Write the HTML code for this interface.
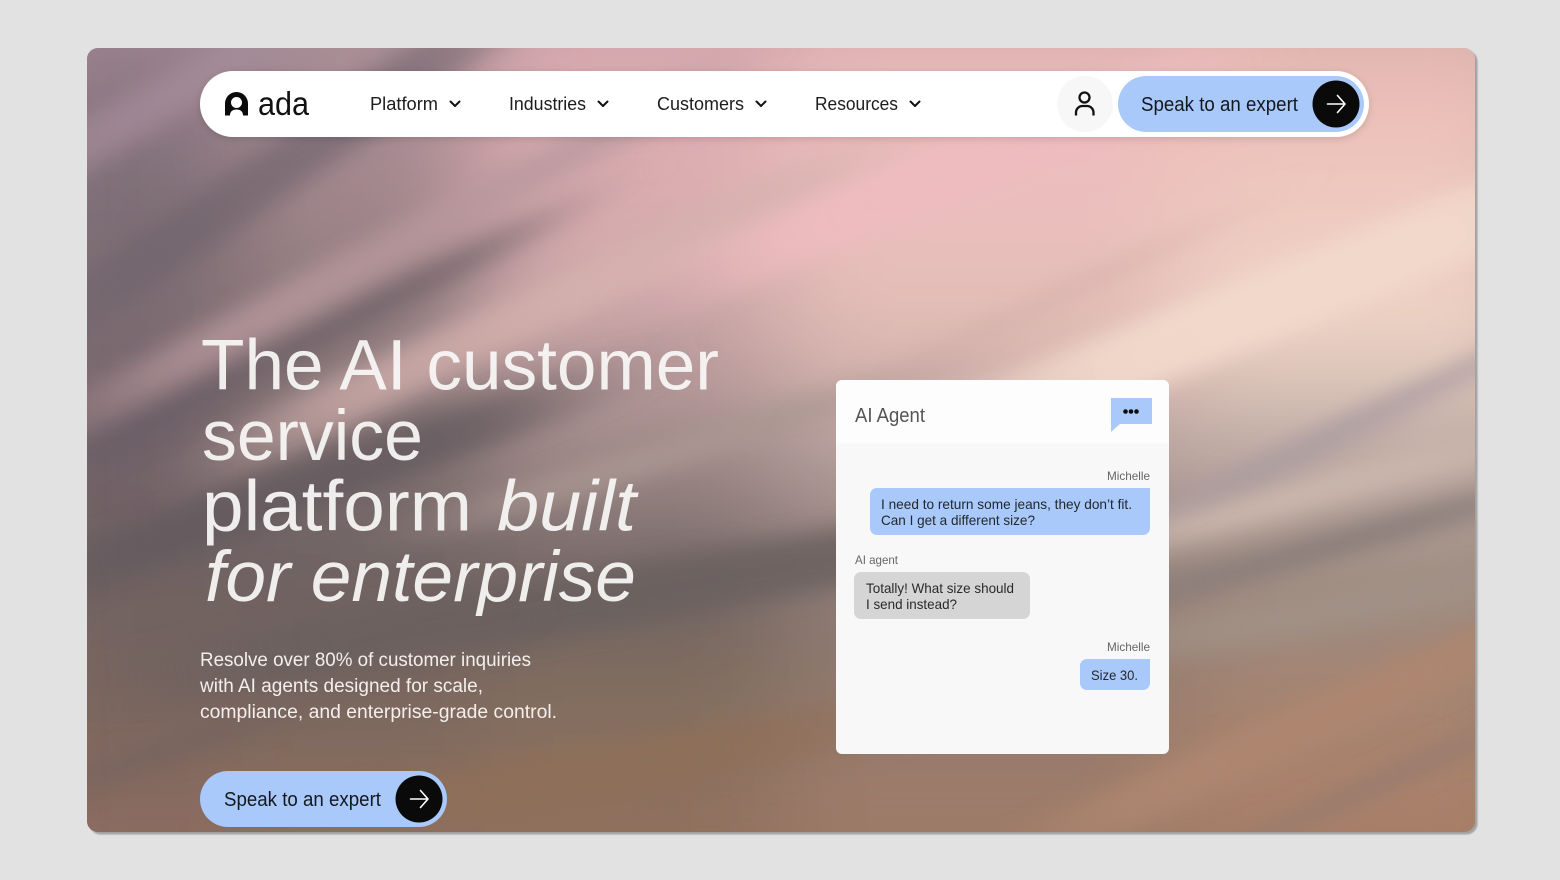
<!DOCTYPE html>
<html lang="en">
<head>
<meta charset="utf-8">
<title>Ada</title>
<style>
html,body{margin:0;padding:0;width:1560px;height:880px;overflow:hidden;background:#e2e2e2}
svg{display:block}
text{font-family:"Liberation Sans",sans-serif}
</style>
</head>
<body>
<svg width="1560" height="880" viewBox="0 0 1560 880" xmlns="http://www.w3.org/2000/svg">
<defs>
<clipPath id="card"><rect x="87" y="48" width="1388" height="784" rx="11"/></clipPath>
<linearGradient id="base" x1="0" y1="0" x2="0" y2="1"><stop offset="0" stop-color="#b09a98"/><stop offset=".7" stop-color="#96796c"/><stop offset="1" stop-color="#94745f"/></linearGradient>
<filter id="b45" filterUnits="userSpaceOnUse" x="0" y="0" width="1560" height="880"><feGaussianBlur stdDeviation="55"/></filter>
<filter id="s" x="-60%" y="-300%" width="220%" height="700%"><feGaussianBlur stdDeviation="75 11"/></filter>
<filter id="b2" x="-5%" y="-5%" width="110%" height="110%"><feGaussianBlur stdDeviation="0.7"/></filter>
<filter id="ns" x="-5%" y="-30%" width="110%" height="180%"><feDropShadow dx="0" dy="2" stdDeviation="4" flood-color="#000" flood-opacity=".14"/></filter>
</defs>

<rect x="89.500" y="50.500" width="1388" height="784" rx="11" fill="#a2a2a2" filter="url(#b2)"/>
<g clip-path="url(#card)">
  <rect x="87" y="48" width="1388" height="784" fill="url(#base)"/>
  <g filter="url(#b45)">
    <rect x="0" y="0" width="240" height="130" fill="#927c89"/>
    <rect x="240" y="0" width="240" height="130" fill="#a88c96"/>
    <rect x="480" y="0" width="300" height="130" fill="#dcabb2"/>
    <rect x="780" y="0" width="400" height="130" fill="#ecb9ba"/>
    <rect x="1180" y="0" width="380" height="130" fill="#ebbcb6"/>
    <rect x="0" y="130" width="240" height="130" fill="#7b6d75"/>
    <rect x="240" y="130" width="240" height="130" fill="#a2878c"/>
    <rect x="480" y="130" width="300" height="130" fill="#dcaeb0"/>
    <rect x="780" y="130" width="400" height="130" fill="#ecbfbe"/>
    <rect x="1180" y="130" width="380" height="130" fill="#eec8be"/>
    <rect x="0" y="260" width="240" height="130" fill="#7d6c72"/>
    <rect x="240" y="260" width="240" height="130" fill="#8f7b7e"/>
    <rect x="480" y="260" width="300" height="130" fill="#c5a3a4"/>
    <rect x="780" y="260" width="400" height="130" fill="#e2bdb6"/>
    <rect x="1180" y="260" width="380" height="130" fill="#eed4c6"/>
    <rect x="0" y="390" width="240" height="130" fill="#6e6167"/>
    <rect x="240" y="390" width="240" height="130" fill="#7e6e70"/>
    <rect x="480" y="390" width="300" height="130" fill="#9c8886"/>
    <rect x="780" y="390" width="400" height="130" fill="#b49e9c"/>
    <rect x="1180" y="390" width="380" height="130" fill="#bba9a3"/>
    <rect x="0" y="520" width="240" height="130" fill="#6f6261"/>
    <rect x="240" y="520" width="240" height="130" fill="#6c6160"/>
    <rect x="480" y="520" width="300" height="130" fill="#6e6462"/>
    <rect x="780" y="520" width="400" height="130" fill="#8d7b76"/>
    <rect x="1180" y="520" width="380" height="130" fill="#9c8b80"/>
    <rect x="0" y="650" width="240" height="110" fill="#7a665f"/>
    <rect x="240" y="650" width="240" height="110" fill="#7a675e"/>
    <rect x="480" y="650" width="300" height="110" fill="#84705f"/>
    <rect x="780" y="650" width="400" height="110" fill="#93796c"/>
    <rect x="1180" y="650" width="380" height="110" fill="#a68370"/>
    <rect x="0" y="760" width="240" height="120" fill="#896a60"/>
    <rect x="240" y="760" width="240" height="120" fill="#8c6e5d"/>
    <rect x="480" y="760" width="300" height="120" fill="#8f705d"/>
    <rect x="780" y="760" width="400" height="120" fill="#a07d6b"/>
    <rect x="1180" y="760" width="380" height="120" fill="#ac8169"/>
  </g>
  <!-- streaks: local rects, rotated, blurred strongly along their length -->
  <g transform="translate(180 90) rotate(-30)"><rect x="-190" y="-22" width="380" height="44" fill="#a58d9a" opacity=".75" filter="url(#s)"/></g>
  <g transform="translate(270 175) rotate(-35)"><rect x="-280" y="-26" width="560" height="52" fill="#6f636c" opacity=".65" filter="url(#s)"/></g>
  <g transform="translate(290 350) rotate(-27)"><rect x="-280" y="-15" width="560" height="30" fill="#695d65" opacity=".65" filter="url(#s)"/></g>
  <g transform="translate(390 250) rotate(-28)"><rect x="-320" y="-20" width="640" height="40" fill="#b8989d" opacity=".8" filter="url(#s)"/></g>
  <g transform="translate(560 300) rotate(-25)"><rect x="-330" y="-25" width="660" height="50" fill="#d6b2af" opacity=".75" filter="url(#s)"/></g>
  <g transform="translate(300 490) rotate(-20)"><rect x="-280" y="-25" width="560" height="50" fill="#635a5e" opacity=".8" filter="url(#s)"/></g>
  <g transform="translate(680 450) rotate(-17)"><rect x="-220" y="-15" width="440" height="30" fill="#aa9792" opacity=".85" filter="url(#s)"/></g>
  <g transform="translate(600 600) rotate(-10)"><rect x="-420" y="-30" width="840" height="60" fill="#6b615f" opacity=".85" filter="url(#s)"/></g>
  <g transform="translate(220 730) rotate(-20)"><rect x="-210" y="-13" width="420" height="26" fill="#75635f" opacity=".7" filter="url(#s)"/></g>
  <g transform="translate(600 770) rotate(-10)"><rect x="-260" y="-25" width="520" height="50" fill="#8f7059" opacity=".7" filter="url(#s)"/></g>
  <g transform="translate(960 170) rotate(-22)"><rect x="-260" y="-30" width="520" height="60" fill="#eebcc0" opacity=".9" filter="url(#s)"/></g>
  <g transform="translate(1280 300) rotate(-22)"><rect x="-300" y="-35" width="600" height="70" fill="#f2d9cb" opacity=".95" filter="url(#s)"/></g>
  <g transform="translate(1050 300) rotate(-25)"><rect x="-160" y="-8" width="320" height="16" fill="#cfa9a4" opacity=".55" filter="url(#s)"/></g>
  <g transform="translate(1320 490) rotate(-15)"><rect x="-220" y="-17" width="440" height="34" fill="#c9b6ac" filter="url(#s)"/></g>
  <g transform="translate(1396 403) rotate(-25)"><rect x="-180" y="-8" width="360" height="16" fill="#a89aa0" filter="url(#s)"/></g>
  <g transform="translate(1280 465) rotate(-22)"><rect x="-130" y="-7" width="260" height="14" fill="#a89aa0" opacity=".8" filter="url(#s)"/></g>
  <g transform="translate(1323 548) rotate(-15.500)"><rect x="-220" y="-13" width="440" height="26" fill="#8a7d79" filter="url(#s)"/></g>
  <g transform="translate(1335 610) rotate(-10)"><rect x="-220" y="-20" width="440" height="40" fill="#a19186" opacity=".9" filter="url(#s)"/></g>
  <g transform="translate(1310 725) rotate(-24)"><rect x="-270" y="-23" width="540" height="46" fill="#ae8670" filter="url(#s)"/></g>
  <g transform="translate(1375 785) rotate(-24)"><rect x="-180" y="-9" width="360" height="18" fill="#967a6f" filter="url(#s)"/></g>
</g>

<!-- Nav -->
<rect x="200" y="71" width="1169" height="66" rx="33" fill="#fff" filter="url(#ns)"/>
<path fill-rule="evenodd" fill="#0b0b0b" d="M225 115.500V103.500A11.500 11.500 0 0 1 248 103.500V115.500H243C243 111.500 240.500 109.500 236.500 109.500C232.500 109.500 230 111.500 230 115.500ZM236.500 97A5.500 5.500 0 1 0 236.500 108A5.500 5.500 0 1 0 236.500 97Z"/>
<text x="258" y="115" font-size="33" fill="#111" textLength="51" lengthAdjust="spacingAndGlyphs">ada</text>
<g font-size="18" fill="#1c1c1c">
  <text x="370" y="110" textLength="68" lengthAdjust="spacingAndGlyphs">Platform</text>
  <text x="509" y="110" textLength="77" lengthAdjust="spacingAndGlyphs">Industries</text>
  <text x="657" y="110" textLength="87" lengthAdjust="spacingAndGlyphs">Customers</text>
  <text x="815" y="110" textLength="83" lengthAdjust="spacingAndGlyphs">Resources</text>
</g>
<g fill="none" stroke="#111" stroke-width="2" stroke-linecap="round" stroke-linejoin="round">
  <polyline points="450.500,101.500 455,106 459.500,101.500"/>
  <polyline points="598.500,101.500 603,106 607.500,101.500"/>
  <polyline points="756.500,101.500 761,106 765.500,101.500"/>
  <polyline points="910.500,101.500 915,106 919.500,101.500"/>
</g>
<circle cx="1085" cy="104" r="28" fill="#f7f7f7"/>
<g fill="none" stroke="#111" stroke-width="2.300">
  <circle cx="1084.500" cy="97.500" r="5"/>
  <path d="M1076 115.500V112.500A6.500 6.500 0 0 1 1082.500 106H1087A6.500 6.500 0 0 1 1093.500 112.500V115.500"/>
</g>
<rect x="1118" y="76" width="246" height="56" rx="28" fill="#a8c9f9"/>
<text x="1141" y="111" font-size="20" fill="#14181f" textLength="157" lengthAdjust="spacingAndGlyphs">Speak to an expert</text>
<circle cx="1336" cy="104" r="23.500" fill="#0a0a0a"/>
<g fill="none" stroke="#fff" stroke-width="1.600" stroke-linecap="round" stroke-linejoin="round">
  <path d="M1327.500 104H1345M1337.500 95.500L1345 104L1337.500 112.500"/>
</g>

<!-- Hero -->
<g font-size="71" fill="#f8f6f5" fill-opacity=".94">
  <text x="201" y="389.500" textLength="518" lengthAdjust="spacingAndGlyphs">The AI customer</text>
  <text x="202" y="460" textLength="221" lengthAdjust="spacingAndGlyphs">service</text>
  <text x="202" y="530.500" textLength="270" lengthAdjust="spacingAndGlyphs">platform</text>
  <text x="497" y="530.500" font-style="italic" textLength="139" lengthAdjust="spacingAndGlyphs">built</text>
  <text x="205" y="601" font-style="italic" textLength="431" lengthAdjust="spacingAndGlyphs">for enterprise</text>
</g>
<g font-size="19" fill="#f4efec">
  <text x="200" y="666" textLength="331" lengthAdjust="spacingAndGlyphs">Resolve over 80% of customer inquiries</text>
  <text x="200" y="692" textLength="283" lengthAdjust="spacingAndGlyphs">with AI agents designed for scale,</text>
  <text x="200" y="718" textLength="357" lengthAdjust="spacingAndGlyphs">compliance, and enterprise-grade control.</text>
</g>
<rect x="200" y="771" width="247" height="56" rx="28" fill="#a8c9f9"/>
<text x="224" y="806" font-size="20" fill="#14181f" textLength="157" lengthAdjust="spacingAndGlyphs">Speak to an expert</text>
<circle cx="419" cy="799" r="23.500" fill="#0a0a0a"/>
<g fill="none" stroke="#fff" stroke-width="1.600" stroke-linecap="round" stroke-linejoin="round">
  <path d="M410.500 799H428M420.500 790.500L428 799L420.500 807.500"/>
</g>

<!-- Chat card -->
<rect x="836" y="380" width="333" height="374" rx="6" fill="#f8f8f8"/>
<path d="M836 443.500V386a6 6 0 0 1 6-6H1163a6 6 0 0 1 6 6V443.500Z" fill="#fdfdfd"/>
<text x="855" y="422" font-size="20" fill="#555" textLength="70" lengthAdjust="spacingAndGlyphs">AI Agent</text>
<path d="M1111 398H1152V424H1120L1111 432Z" fill="#a8c9f9"/>
<g fill="#0b0b0b"><circle cx="1125.500" cy="411.500" r="2.300"/><circle cx="1131" cy="411.500" r="2.300"/><circle cx="1136.500" cy="411.500" r="2.300"/></g>

<text x="1107" y="480" font-size="12" fill="#666" textLength="43" lengthAdjust="spacingAndGlyphs">Michelle</text>
<path d="M877 488H1150V528a7 7 0 0 1-7 7H877a7 7 0 0 1-7-7V495a7 7 0 0 1 7-7Z" fill="#a8c9f9"/>
<g font-size="14" fill="#24282e">
  <text x="881" y="509" textLength="251" lengthAdjust="spacingAndGlyphs">I need to return some jeans, they don’t fit.</text>
  <text x="881" y="525" textLength="154" lengthAdjust="spacingAndGlyphs">Can I get a different size?</text>
</g>
<text x="855" y="564" font-size="12" fill="#666" textLength="43" lengthAdjust="spacingAndGlyphs">AI agent</text>
<rect x="854" y="572" width="176" height="47" rx="7" fill="#d5d5d5"/>
<g font-size="14" fill="#2a2a2a">
  <text x="866" y="593" textLength="148" lengthAdjust="spacingAndGlyphs">Totally! What size should</text>
  <text x="866" y="609" textLength="91" lengthAdjust="spacingAndGlyphs">I send instead?</text>
</g>
<text x="1107" y="651" font-size="12" fill="#666" textLength="43" lengthAdjust="spacingAndGlyphs">Michelle</text>
<path d="M1087 659H1150V683a7 7 0 0 1-7 7H1087a7 7 0 0 1-7-7V666a7 7 0 0 1 7-7Z" fill="#a8c9f9"/>
<text x="1091" y="680" font-size="14" fill="#24282e" textLength="47" lengthAdjust="spacingAndGlyphs">Size 30.</text>
</svg>
</body>
</html>
